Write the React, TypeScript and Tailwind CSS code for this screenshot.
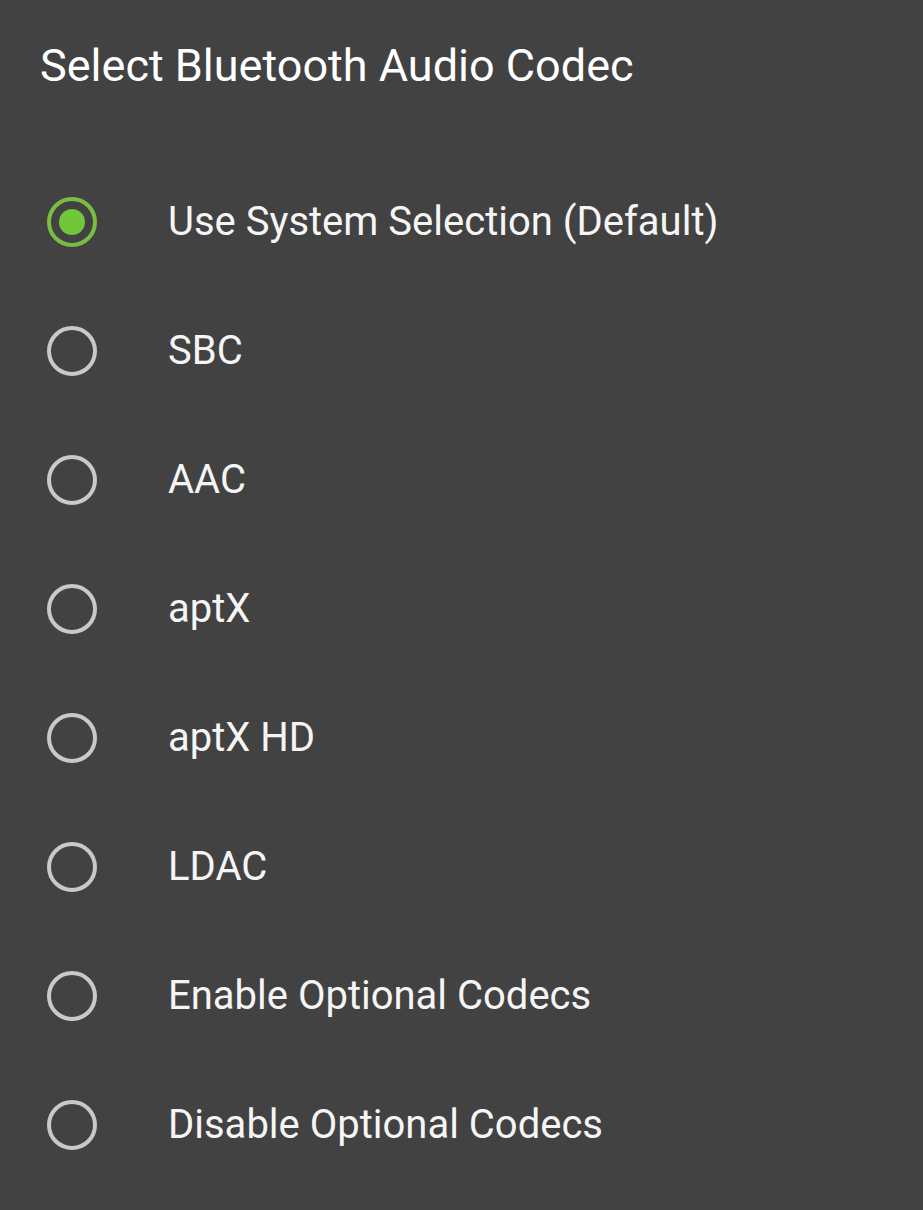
import React, { useState } from 'react';

const codecs = [
    'Use System Selection (Default)',
    'SBC',
    'AAC',
    'aptX',
    'aptX HD',
    'LDAC',
    'Enable Optional Codecs',
    'Disable Optional Codecs',
];

const Radio: React.FC<{ checked: boolean }> = ({ checked }) => {
    if (checked) {
        return (
            <div className="w-[50px] h-[50px] rounded-full border-[4px] border-[#79bd43] flex items-center justify-center">
                <div className="w-[26px] h-[26px] rounded-full bg-[#72c63a]" />
            </div>
        );
    }
    return <div className="w-[50px] h-[50px] rounded-full border-[4px] border-[#c9c9c9]" />;
};

export default function App() {
    const [selected, setSelected] = useState(0);

    return (
        <div className="w-[923px] h-[1210px] bg-[#424242] text-white font-['Roboto',sans-serif] overflow-hidden">
            {/* Dialog title */}
            <div className="h-[157px] pt-[38px] pl-[40px]">
                <h1 className="text-[45px] leading-[56px] font-normal">Select Bluetooth Audio Codec</h1>
            </div>

            {/* Options */}
            <div className="flex flex-col">
                {codecs.map((name, i) => (
                    <button
                        key={name}
                        onClick={() => setSelected(i)}
                        className="h-[129px] flex items-center text-left pl-[47px]"
                    >
                        <Radio checked={selected === i} />
                        <span className="ml-[71px] text-[40px] text-[#f5f5f5]">{name}</span>
                    </button>
                ))}
            </div>
        </div>
    );
}
